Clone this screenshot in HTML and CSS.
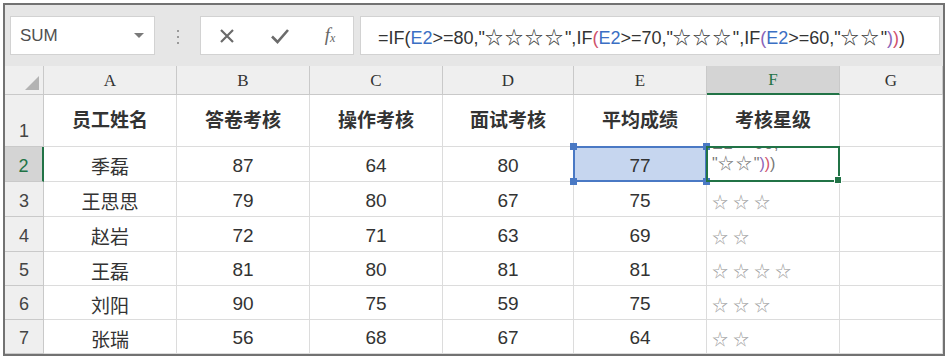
FILE: index.html
```html
<!DOCTYPE html>
<html>
<head>
  <meta charset="utf-8">
  <link rel="stylesheet" href="styles.css">
</head>
<body>
  <div class="frame">
    <div class="toolbar">
      <div class="namebox">
        <span>SUM</span>
        <span class="arrow"></span>
      </div>
      <div class="sep"><span class="dots"></span></div>
      <div class="buttons">
        <svg width="16" height="16" viewBox="0 0 16 16" class="icon">
          <path d="M2 2 L14 14 M14 2 L2 14" stroke="#6b6b6b" stroke-width="2.2" fill="none" />
        </svg>
        <svg width="20" height="16" viewBox="0 0 20 16" class="icon">
          <path d="M2 8.5 L7.5 14 L18 2" stroke="#6b6b6b" stroke-width="2.6" fill="none" />
        </svg>
        <span class="fx"><i>f</i><sub>x</sub></span>
      </div>
      <div class="formula">
        <span class="ftext">=IF(<span class="ref">E2</span>&gt;=80,"<span class="st">☆☆☆☆</span>",IF<span class="p2">(</span><span class="ref">E2</span>&gt;=70,"<span class="st">☆☆☆</span>",IF<span class="p3">(</span><span class="ref">E2</span>&gt;=60,"<span class="st">☆☆</span>"<span class="p3">)</span><span class="p2">)</span>)</span>
      </div>
    </div>

    <div class="sheet">
      <div class="corner"><span class="tri"></span></div>
      <div class="colhead">A</div>
      <div class="colhead">B</div>
      <div class="colhead">C</div>
      <div class="colhead">D</div>
      <div class="colhead">E</div>
      <div class="colhead active">F</div>
      <div class="colhead">G</div>

      <div class="rowhead">1</div>
      <div class="cell title">员工姓名</div>
      <div class="cell title">答卷考核</div>
      <div class="cell title">操作考核</div>
      <div class="cell title">面试考核</div>
      <div class="cell title">平均成绩</div>
      <div class="cell title">考核星级</div>
      <div class="cell"></div>

      <div class="rowhead active">2</div>
      <div class="cell">季磊</div>
      <div class="cell">87</div>
      <div class="cell">64</div>
      <div class="cell">80</div>
      <div class="cell selected">
        77
        <span class="selbox"></span>
        <span class="handle tl"></span>
        <span class="handle tr"></span>
        <span class="handle bl"></span>
        <span class="handle br"></span>
      </div>
      <div class="cell editing">
        <div class="wrap">
          <div class="cutline">E2&gt;=60,</div>
          <div>"<span class="st">☆☆</span>"<span class="p3">)</span><span class="p2">)</span>)</div>
        </div>
        <span class="editbox"></span>
        <span class="fill"></span>
      </div>
      <div class="cell"></div>

      <div class="rowhead">3</div>
      <div class="cell">王思思</div>
      <div class="cell">79</div>
      <div class="cell">80</div>
      <div class="cell">67</div>
      <div class="cell">75</div>
      <div class="cell stars">☆☆☆</div>
      <div class="cell"></div>

      <div class="rowhead">4</div>
      <div class="cell">赵岩</div>
      <div class="cell">72</div>
      <div class="cell">71</div>
      <div class="cell">63</div>
      <div class="cell">69</div>
      <div class="cell stars">☆☆</div>
      <div class="cell"></div>

      <div class="rowhead">5</div>
      <div class="cell">王磊</div>
      <div class="cell">81</div>
      <div class="cell">80</div>
      <div class="cell">81</div>
      <div class="cell">81</div>
      <div class="cell stars">☆☆☆☆</div>
      <div class="cell"></div>

      <div class="rowhead">6</div>
      <div class="cell">刘阳</div>
      <div class="cell">90</div>
      <div class="cell">75</div>
      <div class="cell">59</div>
      <div class="cell">75</div>
      <div class="cell stars">☆☆☆</div>
      <div class="cell"></div>

      <div class="rowhead">7</div>
      <div class="cell">张瑞</div>
      <div class="cell">56</div>
      <div class="cell">68</div>
      <div class="cell">67</div>
      <div class="cell">64</div>
      <div class="cell stars">☆☆</div>
      <div class="cell"></div>
    </div>
  </div>
</body>
</html>
```

FILE: styles.css
```css
body {
  margin: 0;
  background: #fff;
  font-family: "Liberation Sans", "Noto Sans CJK SC", sans-serif;
  color: #333;
}

.frame {
  margin: 3px 0 0 3px;
  width: 938px;
  border: 2px solid #727272;
  background: #e6e6e6;
}

/* formula bar */

.toolbar {
  display: flex;
  align-items: center;
  height: 61px;
  padding-left: 5px;
}

.namebox {
  box-sizing: border-box;
  width: 145px;
  height: 39px;
  display: flex;
  align-items: center;
  padding: 0 10px 0 9px;
  background: #fff;
  border: 1px solid #d2d2d2;
  font-size: 17px;
  color: #505050;
}

.namebox .arrow {
  margin-left: auto;
  border-left: 5px solid transparent;
  border-right: 5px solid transparent;
  border-top: 5px solid #7a7a7a;
}

.sep {
  width: 45px;
  display: flex;
  justify-content: center;
}

.dots {
  width: 2px;
  height: 16px;
  background: radial-gradient(circle, #9a9a9a 1px, transparent 1px) 0 0 / 2px 6px repeat-y;
}

.buttons {
  box-sizing: border-box;
  width: 154px;
  height: 39px;
  display: flex;
  align-items: center;
  justify-content: space-around;
  background: #fff;
  border: 1px solid #d2d2d2;
}

.fx {
  font-family: "Liberation Serif", serif;
  font-size: 19px;
  color: #666;
  padding-bottom: 2px;
}

.fx sub {
  font-size: 12px;
  font-style: italic;
  vertical-align: -1px;
}

.formula {
  box-sizing: border-box;
  width: 580px;
  height: 39px;
  margin-left: 6px;
  display: flex;
  align-items: center;
  padding-left: 17px;
  background: #fff;
  border: 1px solid #d2d2d2;
  font-size: 18px;
  color: #333;
  white-space: nowrap;
}

.st {
  letter-spacing: 2px;
}

.ref {
  color: #3b6fc4;
}

.p2 {
  color: #d0506a;
}

.p3 {
  color: #8a63b8;
}

/* grid */

.sheet {
  display: grid;
  grid-template-columns: 39px 133px 133px 133px 131px 133px 133px 1fr;
  grid-template-rows: 29px 52px 35px 35px 35px 34px 34px 34px;
  background: #fff;
}

.sheet > div {
  box-sizing: border-box;
  display: flex;
  align-items: center;
  justify-content: center;
}

.corner,
.colhead,
.rowhead {
  background: #efefef;
  border-right: 1px solid #c9c9c9;
  border-bottom: 1px solid #c9c9c9;
}

.corner {
  position: relative;
}

.tri {
  position: absolute;
  right: 4px;
  bottom: 4px;
  width: 14px;
  height: 14px;
  background: #b3b3b3;
  clip-path: polygon(100% 0, 100% 100%, 0 100%);
}

.colhead {
  font-family: "Liberation Serif", serif;
  font-size: 17px;
  color: #333;
  padding-top: 1px;
}

.colhead.active {
  background: #d4d4d4;
  color: #217346;
  border-bottom: 2px solid #217346;
}

.sheet > .rowhead {
  align-items: flex-end;
  padding-bottom: 4px;
  font-size: 18px;
  color: #444;
}

.sheet > .rowhead.active {
  background: #d4d4d4;
  color: #217346;
  border-right: 2px solid #217346;
}

.cell {
  border-right: 1px solid #dcdcdc;
  border-bottom: 1px solid #dcdcdc;
  font-size: 19px;
  color: #333;
  padding-top: 3px;
}

.cell.title {
  font-weight: bold;
  font-size: 19px;
  padding-top: 0;
  padding-bottom: 4px;
}

.sheet > .stars {
  justify-content: flex-start;
  padding-left: 5px;
  font-size: 16px;
  letter-spacing: 5px;
  color: #a2a2a2;
}

/* selection */

.selected {
  position: relative;
  background: #c6d6ef;
}

.selbox {
  position: absolute;
  left: -1px;
  top: -1px;
  right: -1px;
  bottom: -1px;
  border: 2px solid #4a79c4;
}

.handle {
  position: absolute;
  width: 7px;
  height: 7px;
  background: #4a79c4;
}

.handle.tl { left: -4px; top: -4px; }
.handle.tr { right: -4px; top: -4px; }
.handle.bl { left: -4px; bottom: -4px; }
.handle.br { right: -4px; bottom: -4px; }

.sheet > .editing {
  position: relative;
  justify-content: flex-start;
  align-items: flex-start;
  padding: 0;
}

.wrap {
  height: 34px;
  width: 100%;
  overflow: hidden;
  display: flex;
  flex-direction: column;
  justify-content: flex-end;
  padding: 0 0 7px 5px;
  box-sizing: border-box;
  font-size: 16px;
  line-height: 20px;
  color: #777;
  white-space: nowrap;
}

.cutline {
  letter-spacing: 1px;
}

.editbox {
  position: absolute;
  left: -1px;
  top: -1px;
  right: -1px;
  bottom: -1px;
  border: 2px solid #217346;
}

.fill {
  position: absolute;
  right: -3px;
  bottom: -3px;
  width: 6px;
  height: 6px;
  background: #217346;
  border: 1px solid #fff;
}
```
